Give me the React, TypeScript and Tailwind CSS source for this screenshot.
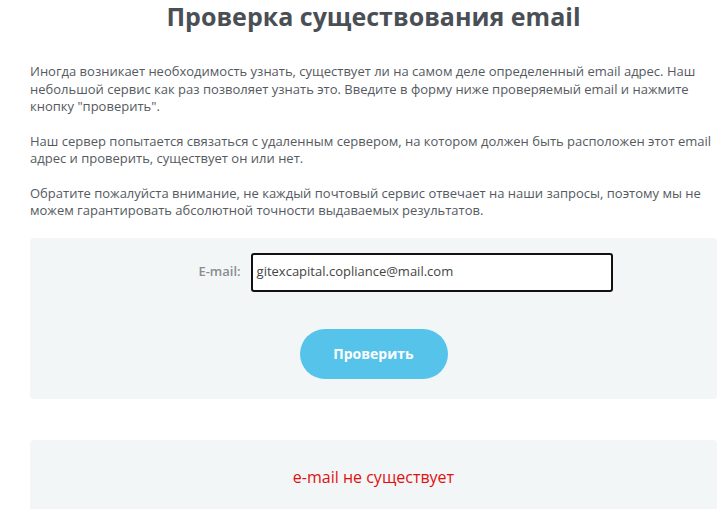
export default function App() {
  return (
    <div className="w-[725px] h-[509px] overflow-hidden bg-white" style={{ fontFamily: '"Open Sans", sans-serif' }}>
      <h1 className="pl-[30px] pr-[8px] text-center text-[25px] font-bold leading-[30px] text-[#4a4f55] pt-[1px]">
        Проверка существования email
      </h1>
      <div className="pl-[30px] pr-[10px] pt-[32px] text-[13px] leading-[17.5px] text-[#555a5f]">
        <p>
          Иногда возникает необходимость узнать, существует ли на самом деле определенный email адрес. Наш небольшой сервис как раз позволяет узнать это. Введите в форму ниже проверяемый email и нажмите кнопку "проверить".
        </p>
        <p className="mt-[17px]">
          Наш сервер попытается связаться с удаленным сервером, на котором должен быть расположен этот email адрес и проверить, существует он или нет.
        </p>
        <p className="mt-[17px]">
          Обратите пожалуйста внимание, не каждый почтовый сервис отвечает на наши запросы, поэтому мы не можем гарантировать абсолютной точности выдаваемых результатов.
        </p>
      </div>
      <div className="ml-[30px] mr-[8px] mt-[18px] h-[161px] rounded-[4px] bg-[#f3f6f7] flex flex-col items-center pt-[15px]">
        <div className="flex items-center gap-[10px] ml-[64px]">
          <label className="text-[13px] font-semibold text-[#8a8d90]">E-mail:</label>
          <div className="w-[362px] h-[39px] rounded-[3px] border-2 border-[#111] bg-white flex items-center px-[4px] text-[13px] text-[#444]">
            gitexcapital.copliance@mail.com
          </div>
        </div>
        <button className="mt-[37px] w-[148px] h-[50px] rounded-full bg-[#56c4ea] text-white text-[14px] font-bold">
          Проверить
        </button>
      </div>
      <div className="ml-[30px] mr-[8px] mt-[41px] h-[80px] rounded-[4px] bg-[#f3f6f7] flex justify-center pt-[25px]">
        <span className="text-[16px] text-[#e01010]">e-mail не существует</span>
      </div>
    </div>
  );
}
